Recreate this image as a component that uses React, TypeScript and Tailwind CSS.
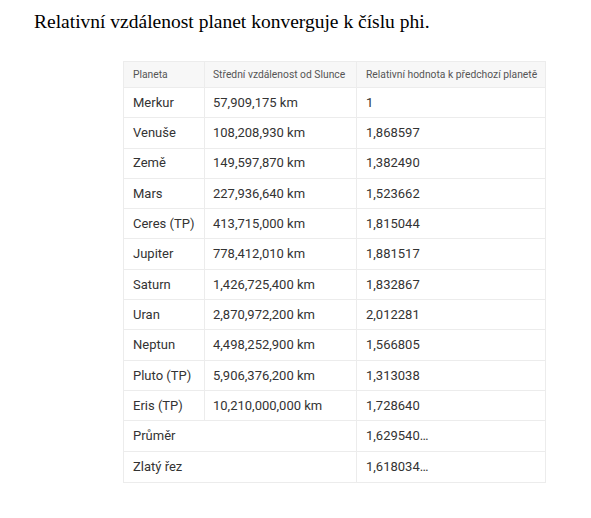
const rows: [string, string, string][] = [
  ['Merkur', '57,909,175 km', '1'],
  ['Venuše', '108,208,930 km', '1,868597'],
  ['Země', '149,597,870 km', '1,382490'],
  ['Mars', '227,936,640 km', '1,523662'],
  ['Ceres (TP)', '413,715,000 km', '1,815044'],
  ['Jupiter', '778,412,010 km', '1,881517'],
  ['Saturn', '1,426,725,400 km', '1,832867'],
  ['Uran', '2,870,972,200 km', '2,012281'],
  ['Neptun', '4,498,252,900 km', '1,566805'],
  ['Pluto (TP)', '5,906,376,200 km', '1,313038'],
  ['Eris (TP)', '10,210,000,000 km', '1,728640'],
];

const summary: [string, string][] = [
  ['Průměr', '1,629540…'],
  ['Zlatý řez', '1,618034…'],
];

export default function App() {
  return (
    <div className="w-[591px] h-[518px] bg-white">
      <p className="pl-[34px] pt-[9px] text-[19.5px] leading-[26px] text-black font-['Liberation_Serif',serif]">
        Relativní vzdálenost planet konverguje k číslu phi.
      </p>

      <div className="ml-[123px] mt-[26px] w-[423px] border border-[#ececec] text-[#333] font-['Roboto',sans-serif]">
        {/* hlavička */}
        <div className="grid grid-cols-[80px_152px_1fr] h-[26px] bg-[#f7f7f7] text-[10.3px] text-[#555] whitespace-nowrap border-b border-[#ececec]">
          <div className="pl-[9px] flex items-center">Planeta</div>
          <div className="pl-[8px] flex items-center border-l border-[#ececec]">Střední vzdálenost od Slunce</div>
          <div className="pl-[9px] flex items-center border-l border-[#ececec]">Relativní hodnota k předchozí planetě</div>
        </div>

        {rows.map(([name, dist, rel]) => (
          <div key={name} className="grid grid-cols-[80px_152px_1fr] h-[30.3px] text-[13px] border-b border-[#ececec]">
            <div className="pl-[9px] flex items-center">{name}</div>
            <div className="pl-[8px] flex items-center border-l border-[#ececec]">{dist}</div>
            <div className="pl-[9px] flex items-center border-l border-[#ececec]">{rel}</div>
          </div>
        ))}

        {summary.map(([label, val], i) => (
          <div
            key={label}
            className={`grid grid-cols-[232px_1fr] h-[30.3px] text-[13px] ${i === 0 ? 'border-b border-[#ececec]' : ''}`}
          >
            <div className="pl-[9px] flex items-center">{label}</div>
            <div className="pl-[9px] flex items-center border-l border-[#ececec]">{val}</div>
          </div>
        ))}
      </div>
    </div>
  );
}
